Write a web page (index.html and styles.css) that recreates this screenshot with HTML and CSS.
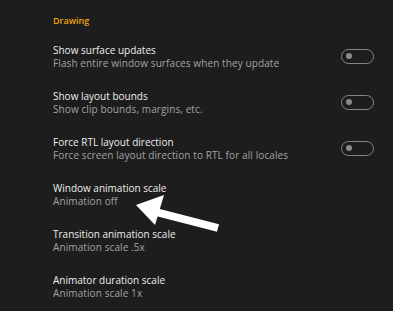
FILE: index.html
```html
<!DOCTYPE html>
<html lang="en">
    <head>
        <meta charset="UTF-8" />
        <title>Developer options</title>
        <link rel="stylesheet" href="styles.css">
    </head>
    <body>
        <div class="settings">
            <!-- Section header -->
            <div class="section-title">Drawing</div>

            <ul class="option-list">
                <li class="option">
                    <div class="option-text">
                        <span class="option-name">Show surface updates</span>
                        <span class="option-desc">Flash entire window surfaces when they update</span>
                    </div>
                    <span class="toggle"><span class="toggle-dot"></span></span>
                </li>
                <li class="option">
                    <div class="option-text">
                        <span class="option-name">Show layout bounds</span>
                        <span class="option-desc">Show clip bounds, margins, etc.</span>
                    </div>
                    <span class="toggle"><span class="toggle-dot"></span></span>
                </li>
                <li class="option">
                    <div class="option-text">
                        <span class="option-name">Force RTL layout direction</span>
                        <span class="option-desc">Force screen layout direction to RTL for all locales</span>
                    </div>
                    <span class="toggle"><span class="toggle-dot"></span></span>
                </li>
                <li class="option">
                    <div class="option-text">
                        <span class="option-name">Window animation scale</span>
                        <span class="option-desc">Animation off</span>
                    </div>
                </li>
                <li class="option">
                    <div class="option-text">
                        <span class="option-name">Transition animation scale</span>
                        <span class="option-desc">Animation scale .5x</span>
                    </div>
                </li>
                <li class="option">
                    <div class="option-text">
                        <span class="option-name">Animator duration scale</span>
                        <span class="option-desc">Animation scale 1x</span>
                    </div>
                </li>
            </ul>

            <!-- Annotation arrow -->
            <svg class="arrow" width="393" height="311" viewBox="0 0 393 311">
                <line x1="152" y1="211" x2="218" y2="228" stroke="#fff" stroke-width="8" />
                <polygon points="136,205 164,195 155,225" fill="#fff" />
            </svg>
        </div>
    </body>
</html>
```

FILE: styles.css
```css
* {
  margin: 0;
  padding: 0;
  box-sizing: border-box;
}

body {
  background-color: #1d1d1d;
  font-family: "Open Sans", "Noto Sans", sans-serif;
  overflow: hidden;
}

.settings {
  position: relative;
  width: 393px;
  height: 311px;
}

/* --- Section header --- */
.section-title {
  height: 33px;
  padding: 14px 0 0 53px;
  line-height: 14px;
  font-size: 9px;
  font-weight: 600;
  color: #f0a20c;
}

/* --- Options --- */
.option-list {
  list-style: none;
}

.option {
  height: 46px;
  display: flex;
  align-items: center;
  justify-content: space-between;
  padding: 0 19px 0 53px;
}

.option-text {
  display: flex;
  flex-direction: column;
}

.option-name {
  font-size: 10px;
  font-weight: 500;
  line-height: 13px;
  color: #ededed;
}

.option-desc {
  font-size: 10px;
  line-height: 12px;
  letter-spacing: 0.1px;
  color: #a3a3a3;
}

.toggle {
  width: 33px;
  height: 15px;
  border: 1.5px solid #858585;
  border-radius: 8px;
  display: flex;
  align-items: center;
  padding-left: 4px;
}

.toggle-dot {
  width: 6px;
  height: 6px;
  border-radius: 50%;
  background-color: #8a8a8a;
}

.arrow {
  position: absolute;
  left: 0;
  top: 0;
}
```
